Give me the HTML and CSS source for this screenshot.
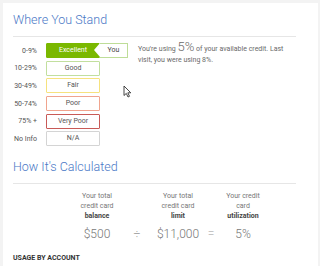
FILE: index.html
```html
<!DOCTYPE html>
<html lang="en">
<head>
    <meta charset="UTF-8">
    <title>Where You Stand</title>
    <link rel="stylesheet" href="styles.css">
</head>
<body>
    <div class="card">
        <h2 class="section-title">Where You Stand</h2>
        <div class="stand">
            <div class="levels">
                <div class="level-row">
                    <span class="range">0-9%</span>
                    <span class="level excellent">Excellent</span>
                    <span class="you">You</span>
                </div>
                <div class="level-row">
                    <span class="range">10-29%</span>
                    <span class="level good">Good</span>
                </div>
                <div class="level-row">
                    <span class="range">30-49%</span>
                    <span class="level fair">Fair</span>
                </div>
                <div class="level-row">
                    <span class="range">50-74%</span>
                    <span class="level poor">Poor</span>
                </div>
                <div class="level-row">
                    <span class="range">75% +</span>
                    <span class="level very-poor">Very Poor</span>
                </div>
                <div class="level-row">
                    <span class="range">No Info</span>
                    <span class="level na">N/A</span>
                </div>
            </div>
            <p class="summary">You're using <span class="big-pct">5%</span> of your available credit. Last visit, you were using 8%.</p>
            <svg class="cursor" width="9" height="13" viewBox="0 0 9 13">
                <path d="M1 1 L1 10.5 L3.3 8.4 L5 12 L6.5 11.3 L4.8 7.8 L7.8 7.8 Z" fill="#fff" stroke="#333" stroke-width="0.9" stroke-linejoin="round"/>
            </svg>
        </div>

        <h2 class="section-title calc-title">How It's Calculated</h2>
        <div class="calc">
            <div class="calc-head col1">Your total<br>credit card<br><b>balance</b></div>
            <div class="calc-head col3">Your total<br>credit card<br><b>limit</b></div>
            <div class="calc-head col5">Your credit<br>card<br><b>utilization</b></div>
            <div class="calc-val">$500</div>
            <div class="calc-op">&divide;</div>
            <div class="calc-val">$11,000</div>
            <div class="calc-op">=</div>
            <div class="calc-val">5%</div>
        </div>

        <h3 class="usage">USAGE BY ACCOUNT</h3>
    </div>
</body>
</html>
```

FILE: styles.css
```css
body {
    margin: 0;
    padding: 3px 2px 0 3px;
    background-color: #f3f3f3;
    font-family: Roboto, "Liberation Sans", sans-serif;
    height: 266px;
    box-sizing: border-box;
    overflow: hidden;
}
.card {
    background-color: #fff;
    height: 300px;
    padding: 7px 22px 0 10px;
}
.section-title {
    margin: 0;
    padding-bottom: 6px;
    border-bottom: 1px solid #e6e6e6;
    font-size: 12.5px;
    line-height: 20px;
    font-weight: 300;
    color: #4a78c6;
}
.stand {
    position: relative;
    display: flex;
    padding-top: 5px;
}
.levels {
    width: 125px;
}
.level-row {
    display: flex;
    align-items: center;
    height: 17.6px;
}
.range {
    width: 24px;
    margin-right: 9px;
    text-align: right;
    font-size: 7px;
    color: #555;
}
.level {
    width: 54px;
    height: 15px;
    box-sizing: border-box;
    border: 1px solid #ccc;
    border-radius: 1px;
    font-size: 7px;
    line-height: 13px;
    text-align: center;
    color: #555;
}
.excellent {
    background-color: #7ab800;
    border-color: #7ab800;
    color: #fff;
}
.you {
    position: relative;
    width: 28px;
    height: 15px;
    box-sizing: border-box;
    border: 1px solid #bedd98;
    border-left: none;
    font-size: 7px;
    line-height: 13px;
    text-align: center;
    color: #444;
}
.you::before {
    content: "";
    position: absolute;
    left: -6px;
    top: -1px;
    border-top: 7.5px solid transparent;
    border-bottom: 7.5px solid transparent;
    border-right: 6px solid #fff;
}
.good { border-color: #c2df9e; }
.fair { border-color: #f6e27e; }
.poor { border-color: #f0a48e; }
.very-poor { border-color: #c85a57; }
.na { border-color: #d4d4d4; }
.summary {
    margin: 0;
    flex: 1;
    font-size: 7px;
    line-height: 11px;
    color: #6a6a6a;
}
.big-pct {
    font-size: 13px;
    font-weight: 300;
    line-height: 10px;
}
.cursor {
    position: absolute;
    left: 110px;
    top: 48px;
}
.calc-title {
    margin-top: 9px;
}
.calc {
    display: grid;
    grid-template-columns: 50px 30px 52px 14px 50px;
    margin: 7px 0 0 59px;
    color: #777;
    text-align: center;
}
.calc-head {
    font-size: 7px;
    line-height: 10px;
}
.calc-head b {
    color: #444;
}
.col1 { grid-column: 1; }
.col3 { grid-column: 3; }
.col5 { grid-column: 5; }
.calc-val, .calc-op {
    margin-top: 5px;
    font-size: 12px;
    font-weight: 300;
    line-height: 16px;
}
.calc-op {
    color: #999;
}
.usage {
    margin: 12px 0 0;
    font-size: 7px;
    font-weight: bold;
    color: #333;
}
```
